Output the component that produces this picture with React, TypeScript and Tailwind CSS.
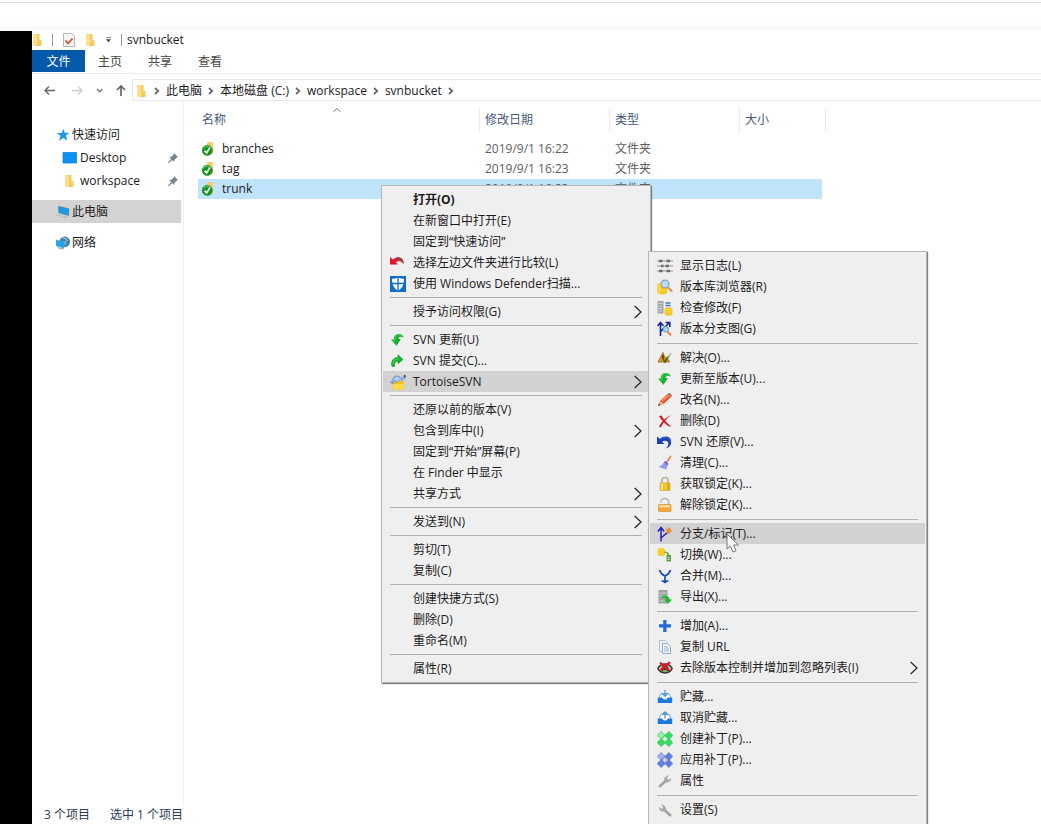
import React from "react";

type IconProps = { children: React.ReactNode; className?: string; box?: string };

function Svg({ children, className = "h-4 w-4", box = "0 0 16 16" }: IconProps) {
  return (
    <svg viewBox={box} className={`shrink-0 ${className}`} fill="none" aria-hidden="true">
      {children}
    </svg>
  );
}

const Folder = ({ className = "h-3 w-3" }: { className?: string }) => (
  <Svg className={className} box="0 0 12 12">
    <path d="M1 0h6.500v11.500H1z" fill="#f3cb62" />
    <path d="M1 0 5 .5V11.500L1 10.800z" fill="#ffe08a" />
    <path d="M7.500 6H9.500v6H4.500z" fill="#f7cb58" />
  </Svg>
);

const UpdateArrow = () => (
  <Svg>
    <path d="M13.500 5C12.500 1 3.800 0 3.800 7.500H1l5.200 6 4-6H8C8 4.800 10 3.500 13.500 5z" fill="#14b52a" />
    <path d="M12 3.500C9 1.500 5 3 5 8.500H3.500" stroke="#57d45d" strokeWidth=".9" />
    <path d="M13.500 5C11 4 8 4.500 8 7.500h2.200l-4 6" stroke="#0c8a1e" strokeWidth=".7" />
  </Svg>
);

const Patch = ({ light, mid, edge }: { light: string; mid: string; edge: string }) => (
  <Svg>
    <g stroke={edge} strokeWidth=".6">
      <path d="m4.200.4 4 4-4 4-4-4z" fill={light} />
      <path d="m11.800.4 4 4-4 4-4-4z" fill={mid} />
      <path d="m4.200 7.600 4 4-4 4-4-4z" fill={mid} />
      <path d="m11.800 7.600 4 4-4 4-4-4z" fill={mid} />
      <path d="m8 4.400 3.600 3.600L8 11.600 4.400 8z" fill={light} />
    </g>
    <path d="M6.500 8h3M8 6.500v3" stroke="#fff" strokeWidth=".7" />
  </Svg>
);

const icons: Record<string, React.ReactNode> = {
  diff: (
    <Svg>
      <path d="M0 2v7.500h8L5.800 7.200C8 5 11 5.500 13.500 9 14 3 8 .5 3 4.500z" fill="#e5182a" />
      <path d="M6 2.700c5-1.500 8 1.800 7.500 6.300C12.500 7 10.500 5 8 4.800z" fill="#8a4a52" />
    </Svg>
  ),
  defender: (
    <Svg>
      <path d="M0 0h16v16H0z" fill="#0f6cc9" />
      <path d="M8 1.500c2 1 4 1.300 6 1.300C14 9 12 12.500 8 14.800 4 12.500 2 9 2 2.800c2 0 4-.3 6-1.300z" fill="#fff" />
      <path d="M8 1v14M1 7.500h14" stroke="#0f6cc9" strokeWidth="1.300" />
    </Svg>
  ),
  update: <UpdateArrow />,
  commit: (
    <Svg>
      <path d="M2 13.500C.5 8 3.500 4.500 8 4.500V1.800l5 4.700-5 4.200V8.200C5.500 8 4 9.800 4.500 13.500z" fill="#14b52a" stroke="#0c7d1b" strokeWidth=".5" />
      <path d="M3 11C3 7.500 5 6 9 6" stroke="#57d45d" />
    </Svg>
  ),
  tortoise: (
    <Svg>
      <path d="M2 9c0-4.500 2-7 5-7s5.500 2.500 5.500 7z" fill="#8eb2e8" stroke="#6a88ae" strokeWidth=".7" />
      <path d="M3.500 5.500 7 4l4 2M7 3v4" stroke="#dbe8fb" strokeWidth=".8" />
      <path d="m11.500 4 2-2.500L15.500 3l-1 2.500-2.500.5z" fill="#8daccf" />
      <path d="M14 1h1.500v2.500H14z" fill="#283e59" />
      <path d="M0 7.500c1 1.500 2 1.500 4 1.500" stroke="#4c7bb0" />
      <path d="M3.500 8.500h4l1-1.500h5v8.500h-10z" fill="#f2bd0c" />
      <path d="M3.500 10h10v5.500h-10z" fill="#ffdf3f" />
    </Svg>
  ),
  log: (
    <Svg>
      <path d="M0 3h16M0 8h16M0 13h16" stroke="#949494" strokeWidth="1.200" />
      <path d="M2 3h3.500M9.500 3H13M4 8h2.500M8.500 8H12M2 13h3.500M9.500 13H13" stroke="#6c6c6c" strokeWidth="2.600" />
    </Svg>
  ),
  browser: (
    <Svg>
      <path d="M.5 5.500c0-2 9.500-2 9.500 0v8c0 2.500-9.500 2.500-9.500 0z" fill="#f5bd10" />
      <path d="M2.500 5v9.500" stroke="#ffe04a" strokeWidth="2" />
      <path d="M5.500 10v5M8 10v4.500M.5 10.500H10" stroke="#fbd93e" />
      <path d="m11 8.500 3.500 3.500" stroke="#e8954e" strokeWidth="2.200" strokeLinecap="round" />
      <circle cx="8" cy="5" r="3.900" fill="#b8dcf5" stroke="#8ba4b8" strokeWidth="1.200" />
    </Svg>
  ),
  check: (
    <Svg>
      <path d="M.5 1h6v12.500h-6z" fill="#a3a7a8" />
      <path d="M1.500 3.500H5M1.500 6H5M1.500 8.500H5M1.500 11H5" stroke="#d3d6d8" />
      <path d="M8.500 3h5M8.500 5.500h5" stroke="#3b79bb" strokeWidth="1.400" />
      <path d="M8 9c0-1.700 7-1.700 7 0v5c0 1.700-7 1.700-7 0z" fill="#fbd22b" stroke="#e3b60d" strokeWidth=".6" />
    </Svg>
  ),
  graph: (
    <Svg>
      <path d="M3.500 15V2.500M.6 5 3.500 1.500 6.400 5M3.500 10.500 12 2M8.500 1.500h4.300V6" stroke="#14249a" strokeWidth="1.600" />
      <circle cx="8.800" cy="8.300" r="2.800" fill="#9ed8f5" stroke="#5d93b8" strokeWidth=".8" />
      <path d="m10.800 10.800 2.700 3" stroke="#ec7b48" strokeWidth="2" strokeLinecap="round" />
    </Svg>
  ),
  resolve: (
    <Svg>
      <path d="M6 2.500 1 12h11.500L9.500 7 8 8z" fill="#e89a14" stroke="#9c5a19" strokeWidth=".8" />
      <path d="M6 5v4.500" stroke="#3c301a" strokeWidth="1.500" />
      <path d="m5.500 9.500 2.500 4L14.500 3 8.300 9.500z" fill="#3c6d12" />
      <path d="M9.500 8 14.500 3" stroke="#b8a21a" strokeWidth=".8" />
    </Svg>
  ),
  rename: (
    <Svg>
      <path d="m1 14 2-5 7.500-7L14 5 7 11.800z" fill="#eb5629" />
      <path d="m5 9 7-6" stroke="#ff9b65" strokeWidth="1.400" />
      <path d="m1 14 2-5 4 2.800z" fill="#dbb483" />
      <path d="m10.500 2 2-1.200L15 3.500 14 5z" fill="#a66a58" />
      <path d="m1 14 .9-2.300 1.600 1.200z" fill="#333" />
    </Svg>
  ),
  remove: (
    <Svg>
      <path d="M2 3 4.500 2.500C7 6.500 9.500 10 14 13.500h-2C8 11 4.500 7.500 2 3z" fill="#e21721" />
      <path d="M14 2.200C9.500 5.500 6 9.500 3.800 14.500L2 13.500c2.500-4.500 6-8.700 12-11.300z" fill="#d5101c" />
    </Svg>
  ),
  revert: (
    <Svg>
      <path d="M0 2.500V10h7.500L5 7.700C7.500 6 11.300 6.200 11.300 9.500c0 2-.8 3.500-2.600 5 3.800-1.200 5.500-3.500 5.500-6.500C14.200 2 7 1 3 5z" fill="#1740bd" />
      <path d="M5 5c4-2.500 8-1 8.500 3" stroke="#5876dd" strokeWidth=".7" />
    </Svg>
  ),
  cleanup: (
    <Svg>
      <path d="m13.500 1.500-4 6" stroke="#f0854a" strokeWidth="1.700" strokeLinecap="round" />
      <path d="M7.500 6.500 11 9.500 9 14.500l-7.500-2.800C4.500 11 6 9 7.500 6.500z" fill="#8f8df0" />
      <path d="m7.500 6.500 3.500 3" stroke="#5a62d5" strokeWidth="1.600" />
      <path d="M4.500 12 7.500 8.500M7 13l2-3" stroke="#b5b5fb" strokeWidth=".8" />
    </Svg>
  ),
  lock: (
    <Svg>
      <path d="M5 8V4.500c0-4 6-4 6 0V8" stroke="#b5b39c" strokeWidth="1.700" />
      <rect x="3" y="7" width="10" height="7.500" rx=".6" fill="#f3c228" stroke="#c79a1b" strokeWidth=".6" />
      <path d="M5 7.500v6.500" stroke="#ffe98e" strokeWidth="2" />
      <path d="M11.500 7.500v6.500" stroke="#d89f10" strokeWidth="1.500" />
    </Svg>
  ),
  unlock: (
    <Svg>
      <path d="M4 5.500V4.500c0-4 7.500-4 7.500 0V8" stroke="#bbb9b5" strokeWidth="1.700" />
      <rect x="1.500" y="7.500" width="12.500" height="7" rx=".6" fill="#f0a63a" stroke="#cf8a2c" strokeWidth=".6" />
      <path d="M2 9.300h11" stroke="#ffdd96" strokeWidth="2.200" />
    </Svg>
  ),
  branch: (
    <Svg>
      <path d="M4 15.500V2M.8 5.500 4 1.500l3.200 4M4 12l6.500-5.500" stroke="#1f1fc8" strokeWidth="1.500" />
      <path d="m10.500.5 1.300 2 2.300-.8-.6 2.300 2 1.500-2.500.5-.4 2.500-1.700-2-2.500.4 1.300-2.200-1.400-2 2.300.2z" fill="#f28a35" />
    </Svg>
  ),
  switch: (
    <Svg>
      <path d="M1 2.500C1 1 7.500 1 7.500 2.500v5C7.500 9 1 9 1 7.500z" fill="#fbd21d" stroke="#e3b80d" strokeWidth=".5" />
      <path d="M7 4.500c3.500 0 5.500.5 5.500 4h1.500L11.500 11 9 8.500h1.500C10.300 7 9.500 6 7 6z" fill="#8fa95f" />
      <path d="M9.500 8h4.500v6.500H9.500z" fill="#5d9c46" />
      <path d="M10.500 10.500h2.500M10.500 12.500h2.500" stroke="#c3d9b5" />
    </Svg>
  ),
  merge: (
    <Svg>
      <path d="M2.500 2c.8 2.500 2.500 4.700 5.500 6 3-1.300 4.700-3.500 5.500-6M8 8v6.500M4.500 13h1.700L8 14.500 9.800 13h1.700" stroke="#1c4ab5" strokeWidth="1.700" />
    </Svg>
  ),
  export: (
    <Svg>
      <path d="M1.500 1h9v13.500h-9z" fill="#9ba19f" />
      <path d="M2.500 4h7M2.500 7h7M2.500 12h6" stroke="#d0d5d3" strokeWidth="1.100" />
      <path d="M5 7c4.500-1 7.500 0 7.500 3.500H15l-4 4.500-3.800-4.500h2.300C9.500 9 8.500 8.500 5 8.800z" fill="#18bd2c" />
    </Svg>
  ),
  add: (
    <Svg>
      <path d="M6.200 2h3.300v4.300H14v3.200H9.500V14H6.200V9.500H2V6.300h4.200z" fill="#236bdb" />
    </Svg>
  ),
  copy: (
    <Svg>
      <path d="M2.500 1.500h6l2 2v9h-8z" fill="#edf1fb" stroke="#b5bfd2" />
      <path d="M5.500 4.500h5l3 3v7h-8z" fill="#f2f6ff" stroke="#9babc6" />
      <path d="M7 8h4M7 10h5M7 12h5" stroke="#8fb0dc" />
    </Svg>
  ),
  ignore: (
    <Svg>
      <path d="M.8 8.500C4 2.500 12 2.500 15.200 8.500 12 14.500 4 14.500.8 8.500z" fill="#c8bcb5" stroke="#3a2c2b" strokeWidth="1.500" />
      <circle cx="8" cy="9" r="3.500" fill="#2a4428" />
      <path d="M5.800 11h4.400" stroke="#7fd06e" strokeWidth="1.600" />
      <path d="m3 2.500 9.500 8.500M13 2 3.500 10.500" stroke="#e4151f" strokeWidth="2.200" />
    </Svg>
  ),
  stash: (
    <Svg>
      <path d="M2 8.500 4 4.500h8l2 4" fill="#f6f9ff" stroke="#6ba7ea" />
      <path d="M.8 8.500H5c.8 2.800 5.200 2.800 6 0h4.200V14H.8z" fill="#1a78e0" />
      <path d="M8 1v6M5.500 4.800 8 7.200l2.500-2.400" stroke="#4a92d8" strokeWidth="1.200" />
    </Svg>
  ),
  unstash: (
    <Svg>
      <path d="M2 8.500 4 4.500h8l2 4" fill="#f6f9ff" stroke="#6ba7ea" />
      <path d="M.8 8.500H5c.8 2.800 5.200 2.800 6 0h4.200V14H.8z" fill="#1a78e0" />
      <path d="M8 8.500V1.800M5.300 4.500 8 1.800l2.700 2.700" stroke="#4a92d8" strokeWidth="1.200" />
    </Svg>
  ),
  createPatch: <Patch light="#96f2ac" mid="#2fe060" edge="#2fae4c" />,
  applyPatch: <Patch light="#9fb2ec" mid="#5d80e6" edge="#5569b3" />,
  properties: (
    <Svg>
      <path d="M2.800 13.200 8.500 8" stroke="#a2a2a2" strokeWidth="2.600" strokeLinecap="round" />
      <path d="M7 8.500C6.500 5 9 2.500 12 2.500L10 5l.5 1.500 1.700.2L14 4.800c.5 3-2 5.200-5 4.700z" fill="#a8a8a8" />
    </Svg>
  ),
  settings: (
    <Svg>
      <path d="M13.200 13.200 7.500 8" stroke="#a2a2a2" strokeWidth="2.600" strokeLinecap="round" />
      <path d="M9 8.500c.5-3.500-2-6-5-6L6 5l-.5 1.500-1.700.2L2 4.800c-.5 3 2 5.200 5 4.700z" fill="#a8a8a8" />
    </Svg>
  ),
  help: (
    <Svg>
      <circle cx="8" cy="8" r="6.500" fill="#888" />
      <path d="M6 6.500c0-3 4-3 4-.5 0 1.500-2 1.500-2 3M8 11v1.200" stroke="#fff" strokeWidth="1.300" />
    </Svg>
  ),
};

type Entry = { label: string; icon?: string; sub?: boolean; active?: boolean; bold?: boolean };

const folderMenu: Entry[][] = [
  [
    { label: "打开(O)", bold: true },
    { label: "在新窗口中打开(E)" },
    { label: "固定到“快速访问”" },
    { label: "选择左边文件夹进行比较(L)", icon: "diff" },
    { label: "使用 Windows Defender扫描...", icon: "defender" },
  ],
  [{ label: "授予访问权限(G)", sub: true }],
  [
    { label: "SVN 更新(U)", icon: "update" },
    { label: "SVN 提交(C)...", icon: "commit" },
    { label: "TortoiseSVN", icon: "tortoise", sub: true, active: true },
  ],
  [
    { label: "还原以前的版本(V)" },
    { label: "包含到库中(I)", sub: true },
    { label: "固定到“开始”屏幕(P)" },
    { label: "在 Finder 中显示" },
    { label: "共享方式", sub: true },
  ],
  [{ label: "发送到(N)", sub: true }],
  [{ label: "剪切(T)" }, { label: "复制(C)" }],
  [{ label: "创建快捷方式(S)" }, { label: "删除(D)" }, { label: "重命名(M)" }],
  [{ label: "属性(R)" }],
];

const svnMenu: Entry[][] = [
  [
    { label: "显示日志(L)", icon: "log" },
    { label: "版本库浏览器(R)", icon: "browser" },
    { label: "检查修改(F)", icon: "check" },
    { label: "版本分支图(G)", icon: "graph" },
  ],
  [
    { label: "解决(O)...", icon: "resolve" },
    { label: "更新至版本(U)...", icon: "update" },
    { label: "改名(N)...", icon: "rename" },
    { label: "删除(D)", icon: "remove" },
    { label: "SVN 还原(V)...", icon: "revert" },
    { label: "清理(C)...", icon: "cleanup" },
    { label: "获取锁定(K)...", icon: "lock" },
    { label: "解除锁定(K)...", icon: "unlock" },
  ],
  [
    { label: "分支/标记(T)...", icon: "branch", active: true },
    { label: "切换(W)...", icon: "switch" },
    { label: "合并(M)...", icon: "merge" },
    { label: "导出(X)...", icon: "export" },
  ],
  [
    { label: "增加(A)...", icon: "add" },
    { label: "复制 URL", icon: "copy" },
    { label: "去除版本控制并增加到忽略列表(I)", icon: "ignore", sub: true },
  ],
  [
    { label: "贮藏...", icon: "stash" },
    { label: "取消贮藏...", icon: "unstash" },
    { label: "创建补丁(P)...", icon: "createPatch" },
    { label: "应用补丁(P)...", icon: "applyPatch" },
    { label: "属性", icon: "properties" },
  ],
  [
    { label: "设置(S)", icon: "settings" },
    { label: "帮助(H)", icon: "help" },
  ],
];

function Menu({ groups, place, divider }: { groups: Entry[][]; place: string; divider: string }) {
  return (
    <div
      role="menu"
      className={`absolute border border-[#b4b4b4] bg-[#efefef] px-px py-[3px] shadow-[1px_1px_1px_0px_#808080] ${place}`}
    >
      {groups.map((group, g) => (
        <React.Fragment key={g}>
          {g > 0 && (
            <div role="separator" className={`flex items-center px-[7px] ${divider}`}>
              <span className="h-px flex-1 bg-[#b0b0b0]" />
            </div>
          )}
          {group.map((item) => (
            <button
              key={item.label}
              role="menuitem"
              className={`flex h-[21px] w-full items-center gap-[7px] px-[7px] text-left whitespace-nowrap ${
                item.active ? "bg-[#d2d2d2]" : ""
              } ${item.bold ? "font-bold" : ""}`}
            >
              {item.icon ? icons[item.icon] : <span className="w-4 shrink-0" />}
              <span className="flex-1">{item.label}</span>
              {item.sub && (
                <Svg className="h-4 w-2" box="0 0 8 16">
                  <path d="m.7 2 6.300 6-6.300 6" stroke="#222" strokeWidth="1.200" />
                </Svg>
              )}
            </button>
          ))}
        </React.Fragment>
      ))}
    </div>
  );
}

const Chevron = () => (
  <Svg className="h-3 w-[18px]" box="0 0 18 12">
    <path d="m7 3 3.300 3L7 9" stroke="#666" strokeWidth="1.700" />
  </Svg>
);

const Pin = () => (
  <Svg className="h-3 w-3" box="0 0 12 12">
    <path d="m7 1 4 4-1.500.7-2 2-.3 2.300-2-2L2 11l-1 .3.300-1L4.200 7 2 5l2.500-.3 2-2z" fill="#7b838a" />
  </Svg>
);

function Sidebar() {
  return (
    <nav className="flex w-[152px] shrink-0 flex-col gap-2 border-r border-[#f0f0f0] pt-[22px] pr-0.5">
      <div>
        <button className="flex h-[23px] w-full items-center gap-0.5 pl-6">
          <Svg className="h-[14px] w-[14px]">
            <path d="m8.500 1 1.700 4.600 5.300-.3-4.200 3.400 1.600 5.600-4.600-3-5 3.300 2-5.500L1 5.800l5.300-.1z" fill="#1e9ae8" />
          </Svg>
          快速访问
        </button>
        <button className="flex h-[23px] w-full items-center gap-0.5 pr-0.5 pl-[30px]">
          <Svg>
            <path d="M1 2.500h13.500V13H1z" fill="#0a93f5" stroke="#0877cf" strokeWidth=".7" />
          </Svg>
          <span className="flex-1 text-left">Desktop</span>
          <Pin />
        </button>
        <button className="flex h-[23px] w-full items-center gap-0.5 pr-0.5 pl-[30px]">
          <span className="flex w-4 justify-center">
            <Folder />
          </span>
          <span className="flex-1 text-left">workspace</span>
          <Pin />
        </button>
      </div>
      <button className="flex h-[23px] w-full items-center gap-0.5 bg-[#d3d3d3] pl-6">
        <Svg className="h-[14px] w-[14px]">
          <path d="m0 12 4-2 10 3-4 2z" fill="#a9b4bc" />
          <path d="m3 1.500 11.500 2.800V12L3 8.500z" fill="#199be8" stroke="#447da2" strokeWidth=".7" />
          <path d="m2 12 7 2M4 11l7 2" stroke="#e8edf0" strokeWidth=".7" />
        </Svg>
        此电脑
      </button>
      <button className="flex h-[23px] w-full items-center gap-0.5 pl-6">
        <Svg className="h-[14px] w-[14px]">
          <circle cx="10" cy="6.500" r="6" fill="#3f83ad" />
          <path d="M7 2c3 1 5 0 6 3l-3 2 1 3" stroke="#a5cde0" strokeWidth="1.200" />
          <path d="m0 4.500 9 2V14l-9-3z" fill="#25a5ed" stroke="#5f9cc0" strokeWidth=".7" />
          <path d="m2 13.300 5 1.700 2-1" stroke="#7c919e" />
        </Svg>
        网络
      </button>
    </nav>
  );
}

const files = [
  { name: "branches", date: "2019/9/1 16:22" },
  { name: "tag", date: "2019/9/1 16:23" },
  { name: "trunk", date: "2019/9/1 16:23", selected: true },
];

function FileTable() {
  const head = "flex h-6 items-center border-r border-[#ebebeb]";
  return (
    <table className="table-fixed border-collapse self-start text-left">
      <thead className="text-[#47597a]">
        <tr className="h-[31px] align-top">
          <th className="w-[282px] p-0 font-normal">
            <div className={`relative pl-1 ${head}`}>
              名称
              <Svg className="absolute top-0 left-[135px] h-1 w-2" box="0 0 8 4">
                <path d="M.5 3.700 4 .5l3.500 3.200" stroke="#777" />
              </Svg>
            </div>
          </th>
          <th className="w-[130px] p-0 font-normal">
            <div className={`pl-[5px] ${head}`}>修改日期</div>
          </th>
          <th className="w-[130px] p-0 font-normal">
            <div className={`pl-[5px] ${head}`}>类型</div>
          </th>
          <th className="w-[82px] p-0 font-normal">
            <div className="flex h-6 items-center pl-[5px]">大小</div>
          </th>
          <th className="w-1 p-0" aria-label="列边缘">
            <div className={head} />
          </th>
        </tr>
      </thead>
      <tbody className="text-[#5e5e5e]">
        {files.map((file) => {
          const fill = file.selected ? "bg-[#bfe4fb]" : "";
          return (
            <tr key={file.name} className="h-5">
              <td className={`p-0 ${fill}`}>
                <div className="flex items-center gap-1.5 pl-1 text-[#1b1b1b]">
                  <Svg className="h-[14px] w-[14px]">
                    <path d="M6 0h6.500v14H6z" fill="#f6cf68" />
                    <circle cx="6" cy="9.500" r="5.900" fill="#14961d" stroke="#0b7813" strokeWidth=".5" />
                    <path d="M1.500 7.500C3 4.500 8 4 10.500 7" stroke="#58bd57" strokeWidth="1.200" />
                    <path d="m3 10 2.300 2.500L9 6.500" stroke="#fff" strokeWidth="1.900" />
                  </Svg>
                  {file.name}
                </div>
              </td>
              <td className={`p-0 pl-[5px] ${fill}`}>{file.date}</td>
              <td className={`p-0 pl-[5px] ${fill}`}>文件夹</td>
              <td className={`p-0 ${fill}`} />
              <td className="p-0" />
            </tr>
          );
        })}
      </tbody>
    </table>
  );
}

const crumbs = ["此电脑", "本地磁盘 (C:)", "workspace", "svnbucket"];

export default function App() {
  return (
    <div className="relative flex h-screen flex-col overflow-hidden bg-white font-['Open_Sans','Noto_Sans_CJK_SC',sans-serif] text-[12px] leading-[18px] text-[#1b1b1b]">
      <div className="h-[31px] shrink-0 bg-linear-to-b from-white from-70% to-[#f7f8fa] pt-0.5">
        <div className="h-px bg-[#dedede]" />
      </div>
      <div className="flex flex-1">
        <div className="w-8 shrink-0 bg-black" />
        <div className="flex min-w-0 flex-1 flex-col">
          <header className="flex h-[18px] items-center gap-2">
            <Folder />
            <span className="h-3 w-px bg-[#999]" />
            <Svg>
              <path d="M2.500 1.500h8l3 3v10h-11z" fill="#f4f5f8" stroke="#b5b7bd" />
              <path d="m4.500 8.500 2.500 3 4.500-5" stroke="#dc4c27" strokeWidth="1.700" />
            </Svg>
            <Folder />
            <Svg className="h-2 w-2" box="0 0 8 8">
              <path d="M1 1.500h5M1.500 3.500h4L3.500 6z" fill="#444" stroke="#444" strokeWidth=".6" />
            </Svg>
            <div className="flex items-center gap-[5px]">
              <span className="h-3 w-px bg-[#999]" />
              <h1>svnbucket</h1>
            </div>
          </header>

          <div className="flex h-[25px] items-start border-b border-[#ececec] pt-px text-[#444]">
            <button className="h-[22px] w-[53px] bg-[#0459ab] pt-0.5 text-white">文件</button>
            <button className="h-[22px] w-[50px] pt-0.5">主页</button>
            <button className="h-[22px] w-[50px] pt-0.5">共享</button>
            <button className="h-[22px] w-[50px] pt-0.5">查看</button>
          </div>

          <div className="mt-[5px] flex h-[22px] items-center">
            <div className="flex w-[100px] shrink-0 items-center justify-between pr-[5px] pl-3">
              <button aria-label="后退">
                <Svg className="h-3 w-3" box="0 0 12 12">
                  <path d="M11 6.500H1M5 2.500l-4 4 4 4" stroke="#666" strokeWidth="1.500" />
                </Svg>
              </button>
              <button aria-label="前进" className="ml-1">
                <Svg className="h-3 w-3" box="0 0 12 12">
                  <path d="M0 6.500h10M6 2.500l4 4-4 4" stroke="#cfcfcf" strokeWidth="1.300" />
                </Svg>
              </button>
              <button aria-label="最近位置">
                <Svg className="h-2 w-2" box="0 0 8 8">
                  <path d="m2 3 2.700 2.700L7.400 3" stroke="#777" strokeWidth="1.400" />
                </Svg>
              </button>
              <button aria-label="上移">
                <Svg className="h-3 w-3" box="0 0 12 12">
                  <path d="M6 12V2M2 6l4-4 4 4" stroke="#666" strokeWidth="1.700" />
                </Svg>
              </button>
            </div>
            <div className="flex h-full flex-1 items-center border-y border-l border-[#e9e9e9] pt-px pl-[3px]">
              <Folder />
              {crumbs.map((crumb) => (
                <React.Fragment key={crumb}>
                  <Chevron />
                  <button>{crumb}</button>
                </React.Fragment>
              ))}
              <Chevron />
            </div>
          </div>

          <main className="flex flex-1 gap-[14px]">
            <Sidebar />
            <div className="pt-[7px]">
              <FileTable />
            </div>
          </main>

          <footer className="flex h-[18px] shrink-0 items-center gap-5 pl-3 text-[#2b3b55]">
            <span>3 个项目</span>
            <span>选中 1 个项目</span>
          </footer>
        </div>
      </div>

      <Menu groups={folderMenu} place="top-[185px] left-[381px] w-[270px]" divider="h-[7px]" />
      <Menu groups={svnMenu} place="top-[251px] left-[648px] w-[279px]" divider="h-2" />

      <Svg className="absolute top-[533px] left-[726px] h-5 w-[14px]" box="0 0 14 20">
        <path d="M1 1v15l3.500-3 2.500 6 3-1.300L7.500 12H12.500z" fill="#fff" stroke="#777" />
      </Svg>
    </div>
  );
}
